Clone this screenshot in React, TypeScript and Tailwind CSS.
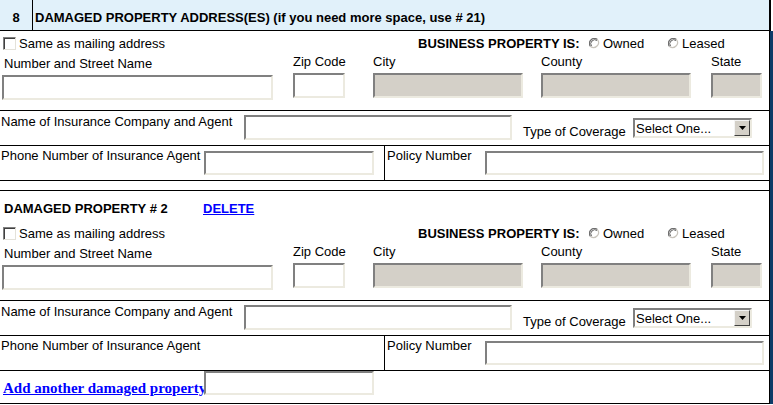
const sunken =
    "border-2 border-t-[#808080] border-l-[#808080] border-b-[#eceae0] border-r-[#eceae0]";

function Field({ className, disabled }: { className: string; disabled?: boolean }) {
    return (
        <input
            type="text"
            readOnly
            className={`${sunken} ${disabled ? "bg-[#d4d0c8]" : "bg-white"} ${className}`}
        />
    );
}

function Checkbox() {
    return (
        <span className="inline-block h-[13px] w-[13px] border border-t-[#808080] border-l-[#808080] border-b-[#e4e2da] border-r-[#e4e2da] bg-white shadow-[inset_1px_1px_0_#404040]" />
    );
}

function Radio() {
    return (
        <svg width="12" height="12" viewBox="0 0 12 12" className="shrink-0">
            <circle cx="6" cy="6" r="5" fill="#fff" />
            <path d="M1.5 8.5 A5 5 0 0 1 8.5 1.5" fill="none" stroke="#6f6f6f" strokeWidth="1.2" />
            <path d="M2.6 8.2 A4 4 0 0 1 8.2 2.6" fill="none" stroke="#404040" strokeWidth="0.8" />
            <path d="M8.5 1.5 A5 5 0 0 1 1.5 8.5" fill="none" stroke="#c8c4bc" strokeWidth="1.2" />
        </svg>
    );
}

function Select() {
    return (
        <div className={`${sunken} mt-[7px] flex h-[20px] w-[119px] items-center justify-between bg-white`}>
            <span className="pl-[1px] leading-[15px]">Select One...</span>
            <span className="flex h-[16px] w-[16px] items-center justify-center border border-t-[#f4f4f4] border-l-[#f4f4f4] border-b-[#404040] border-r-[#404040] bg-[#d4d0c8]">
                <svg width="7" height="4" viewBox="0 0 7 4">
                    <path d="M0 0 H7 L3.5 4 Z" fill="#000" />
                </svg>
            </span>
        </div>
    );
}

function AddressBlock() {
    return (
        <div className="h-[80px] border-b border-black pt-[5px]">
            <div className="flex h-[15px] items-center">
                <div className="flex w-[418px] items-center pl-[3px]">
                    <Checkbox />
                    <span className="ml-[3px]">Same as mailing address</span>
                </div>
                <span className="w-[171px] whitespace-nowrap font-bold">BUSINESS PROPERTY IS:</span>
                <div className="flex w-[79px] items-center">
                    <Radio />
                    <span className="ml-[2px]">Owned</span>
                </div>
                <div className="flex items-center">
                    <Radio />
                    <span className="ml-[2px]">Leased</span>
                </div>
            </div>
            <div className="flex">
                <div className="flex w-[293px] flex-col pl-[2px] pt-[5px]">
                    <span className="pl-[2px]">Number and Street Name</span>
                    <Field className="mt-[4px] h-[25px] w-[271px]" />
                </div>
                <div className="flex w-[80px] flex-col pt-[3px]">
                    <span>Zip Code</span>
                    <Field className="mt-[4px] h-[25px] w-[52px]" />
                </div>
                <div className="flex w-[168px] flex-col pt-[3px]">
                    <span>City</span>
                    <Field disabled className="mt-[4px] h-[25px] w-[150px]" />
                </div>
                <div className="flex w-[170px] flex-col pt-[3px]">
                    <span>County</span>
                    <Field disabled className="mt-[4px] h-[25px] w-[150px]" />
                </div>
                <div className="flex flex-col pt-[3px]">
                    <span>State</span>
                    <Field disabled className="mt-[4px] h-[25px] w-[51px]" />
                </div>
            </div>
        </div>
    );
}

function InsuranceRow() {
    return (
        <div className="flex h-[35px] border-b border-black">
            <span className="w-[244px] pl-[1px] pt-[3px]">Name of Insurance Company and Agent</span>
            <Field className="mt-[4px] h-[25px] w-[268px]" />
            <span className="w-[121px] pl-[11px] pt-[13px]">Type of Coverage</span>
            <Select />
        </div>
    );
}

function PhoneRow({ withInput }: { withInput: boolean }) {
    return (
        <div className="flex h-[35px] border-b border-black">
            <div className="flex w-[385px] border-r border-black">
                <span className="w-[204px] pl-[1px] pt-[2px]">Phone Number of Insurance Agent</span>
                {withInput && <Field className="mt-[5px] h-[24px] w-[170px]" />}
            </div>
            <span className="w-[100px] pl-[2px] pt-[2px]">Policy Number</span>
            <Field className="mt-[5px] h-[24px] w-[279px]" />
        </div>
    );
}

export default function App() {
    return (
        <div className="h-[405px] w-[773px] overflow-hidden bg-white font-['Liberation_Sans',Arial,sans-serif] text-[13px] leading-[15px] text-black">
            <div className="flex h-[31px] w-[771px] border-b border-r-2 border-black bg-[#e1f1fa] font-bold">
                <div className="w-[33px] border-r border-black pt-[10px] text-center">8</div>
                <div className="pl-[2px] pt-[10px]">
                    DAMAGED PROPERTY ADDRESS(ES) (if you need more space, use # 21)
                </div>
            </div>
            <div className="w-[773px] border-r-[3px] border-[#0c3b68]">
                <div className="border-r border-black">
                    <AddressBlock />
                    <InsuranceRow />
                    <PhoneRow withInput />
                    <div className="h-[10px] border-b border-black" />

                    <div className="flex h-[30px] pt-[10px] font-bold">
                        <span className="w-[203px] pl-[4px]">DAMAGED PROPERTY # 2</span>
                        <a href="#" className="text-[#0000ff] underline">
                            DELETE
                        </a>
                    </div>
                    <AddressBlock />
                    <InsuranceRow />
                    <PhoneRow withInput={false} />
                    <div className="flex h-[33px] border-b border-black">
                        <div className="w-[204px] whitespace-nowrap pl-[3px] pt-[9px]">
                            <a
                                href="#"
                                className="font-['Liberation_Serif','Times_New_Roman',serif] text-[15px] font-bold leading-[17px] text-[#0000ff] underline"
                            >
                                Add another damaged property
                            </a>
                        </div>
                        <Field className="h-[24px] w-[170px]" />
                    </div>
                </div>
            </div>
        </div>
    );
}
